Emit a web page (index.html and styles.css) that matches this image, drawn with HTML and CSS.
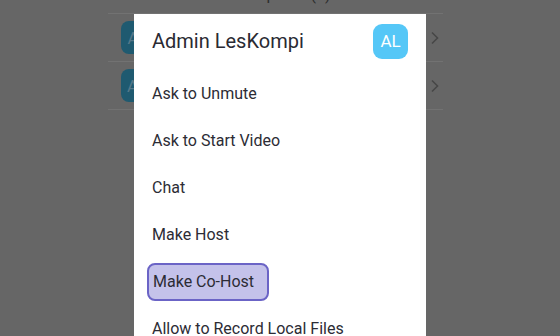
FILE: index.html
```html
<!DOCTYPE html>
<html>
    <head>
        <meta charset="UTF-8">
        <meta name="viewport" content="width=device-width, initial-scale=1.0">
        <title>Participants</title>
        <link rel="stylesheet" href="styles.css">
    </head>
    <body>
        <div class="screen">
            <div class="list">
                <div class="list-title">
                    <p>Participants (2)</p>
                </div>
                <div class="row">
                    <div class="row-avatar">AL</div>
                    <div class="row-name">Admin LesKompi</div>
                    <svg class="chevron" width="10" height="14" viewBox="0 0 10 14"><path d="M2 1.5 L7.5 7 L2 12.5" fill="none" stroke="#474747" stroke-width="1.6"/></svg>
                </div>
                <div class="row">
                    <div class="row-avatar">AS</div>
                    <div class="row-name">Andi Setiawan</div>
                    <svg class="chevron" width="10" height="14" viewBox="0 0 10 14"><path d="M2 1.5 L7.5 7 L2 12.5" fill="none" stroke="#474747" stroke-width="1.6"/></svg>
                </div>
            </div>

            <div class="dialog">
                <div class="dialog-head">
                    <p class="dialog-name">Admin LesKompi</p>
                    <div class="avatar">AL</div>
                </div>
                <div class="menu">
                    <div class="menu-item"><span>Ask to Unmute</span></div>
                    <div class="menu-item"><span>Ask to Start Video</span></div>
                    <div class="menu-item"><span>Chat</span></div>
                    <div class="menu-item"><span>Make Host</span></div>
                    <div class="menu-item"><span class="focused">Make Co-Host</span></div>
                    <div class="menu-item"><span>Allow to Record Local Files</span></div>
                </div>
            </div>
        </div>
    </body>
</html>
```

FILE: styles.css
```css
*{
    font-family: Roboto, "Noto Sans", sans-serif;
    box-sizing: border-box;
}

html, body{
    margin: 0;
    padding: 0;
    height: 100%;
    overflow: hidden;
}

body{
    background-color: #666666;
}

.screen{
    position: relative;
    display: flow-root;
    width: 560px;
    height: 336px;
    overflow: hidden;
}

.list{
    width: 335px;
    margin: 0 0 0 108px;
}

.list-title{
    height: 29px;
    margin-top: -15px;
    border-bottom: 1px solid #727272;
}

.list-title p{
    margin: -3px 0 0 0;
    font-size: 16px;
    text-align: center;
    color: #2e2e2e;
}

.row{
    display: flex;
    align-items: center;
    height: 48px;
    padding: 0 0 0 13px;
    border-bottom: 1px solid #727272;
}

.row-avatar{
    width: 33px;
    height: 33px;
    border-radius: 8px;
    background-color: #1f5a70;
    color: #55788a;
    font-size: 17px;
    display: flex;
    align-items: center;
    justify-content: center;
}

.row-name{
    flex: 1;
    margin-left: 12px;
    font-size: 16px;
    color: #2e2e2e;
}

.chevron{
    margin-right: 3px;
}

/* overlay sheet */
.dialog{
    position: absolute;
    left: 134px;
    top: 14px;
    width: 292px;
    height: 322px;
    overflow: hidden;
    background-color: white;
    padding: 0 18px 0 18px;
}

.dialog-head{
    display: flex;
    align-items: center;
    justify-content: space-between;
    height: 54px;
}

.dialog-name{
    margin: 0;
    font-size: 20px;
    color: #2a2a33;
}

.avatar{
    width: 35px;
    height: 35px;
    border-radius: 9px;
    background-color: #55c7f7;
    color: white;
    font-size: 17px;
    display: flex;
    align-items: center;
    justify-content: center;
}

.menu{
    margin-top: 2px;
}

.menu-item{
    height: 47px;
    display: flex;
    align-items: center;
    font-size: 16px;
    color: #2c2c35;
}

.focused{
    margin-left: -5px;
    padding: 7px 5px 8px 4px;
    background-color: #c4c2ea;
    border: 2px solid #6b64c6;
    border-radius: 8px;
    width: 122px;
}
```
